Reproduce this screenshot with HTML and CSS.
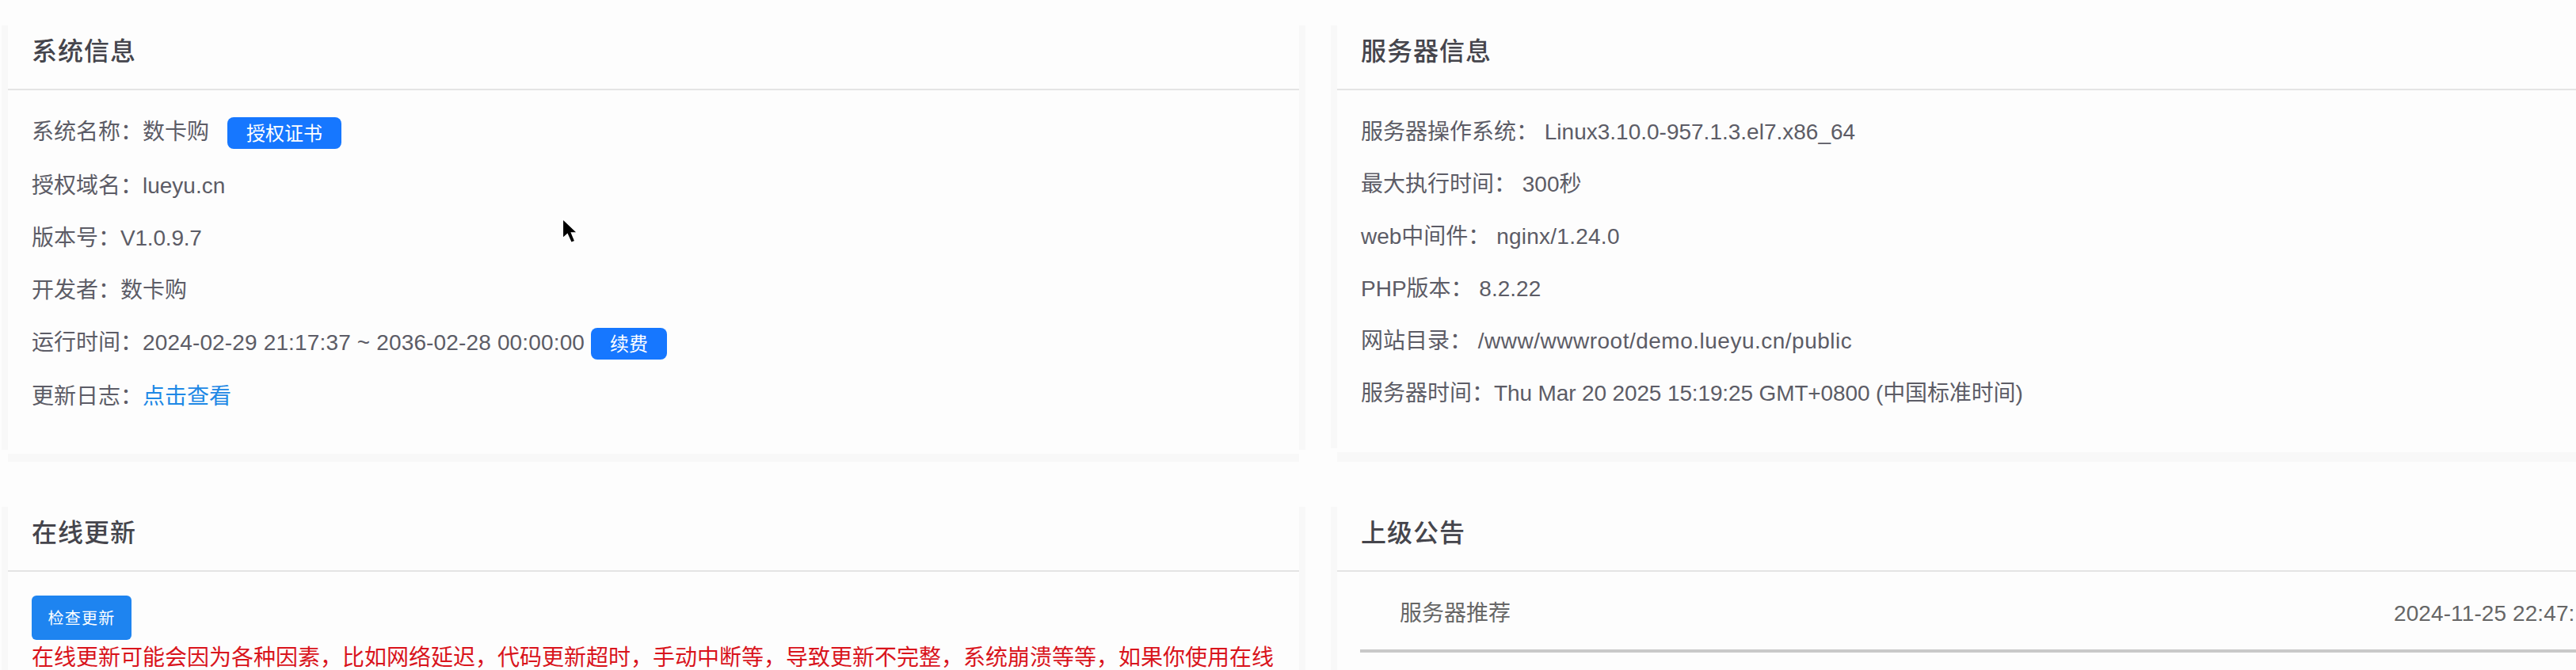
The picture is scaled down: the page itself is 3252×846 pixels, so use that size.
FILE: index.html
```html
<!DOCTYPE html>
<html lang="zh-CN">
<head>
<meta charset="utf-8">
<title>系统信息</title>
<link rel="stylesheet" href="styles.css">
</head>
<body>
<main class="dashboard">
  <section class="card card-system">
    <h2 class="card-header">系统信息</h2>
    <div class="card-body">
      <div class="row row-action"><span>系统名称：数卡购</span><button class="tag tag-license">授权证书</button></div>
      <div class="row"><span>授权域名：lueyu.cn</span></div>
      <div class="row"><span>版本号：<span class="version">V1.0.9.7</span></span></div>
      <div class="row"><span>开发者：数卡购</span></div>
      <div class="row row-action"><span>运行时间：<span class="period">2024-02-29 21:17:37 ~ 2036-02-28 00:00:00</span></span><button class="tag tag-renew">续费</button></div>
      <div class="row"><span>更新日志：<a class="link">点击查看</a></span></div>
    </div>
  </section>
  <section class="card card-server">
    <h2 class="card-header">服务器信息</h2>
    <div class="card-body">
      <div class="row"><span>服务器操作系统： Linux3.10.0-957.1.3.el7.x86_64</span></div>
      <div class="row"><span>最大执行时间： 300秒</span></div>
      <div class="row"><span>web中间件： <span class="middleware">nginx/1.24.0</span></span></div>
      <div class="row"><span>PHP版本： 8.2.22</span></div>
      <div class="row"><span>网站目录： <span class="path">/www/wwwroot/demo.lueyu.cn/public</span></span></div>
      <div class="row"><span>服务器时间：<span class="clock">Thu Mar 20 2025 15:19:25 GMT+0800 (中国标准时间)</span></span></div>
    </div>
  </section>
  <section class="card card-lower">
    <h2 class="card-header">在线更新</h2>
    <div class="update-body">
      <button class="update-btn">检查更新</button>
      <p class="warning">在线更新可能会因为各种因素，比如网络延迟，代码更新超时，手动中断等，导致更新不完整，系统崩溃等等，如果你使用在线</p>
    </div>
  </section>
  <section class="card card-lower">
    <h2 class="card-header">上级公告</h2>
    <div class="notice-body">
      <div class="notice"><span>服务器推荐</span><time class="notice-time">2024-11-25 22:47:</time></div>
    </div>
  </section>
</main>
<svg class="cursor" width="26" height="37" viewBox="0 0 24 34">
  <path d="M3 2V25L8.5 20L13 30L17.5 28L13.5 18.5H20.5Z" fill="#000" stroke="#fff" stroke-width="1.5"/>
</svg>
</body>
</html>
```
FILE: styles.css
```css
* { box-sizing: border-box; }

body {
  margin: 0;
  width: 3252px;
  height: 846px;
  overflow: hidden;
  background: #fdfdfd;
  color: #5c5c66;
  font: 28px/66px "Liberation Sans", "Noto Sans CJK SC", sans-serif;
}

.dashboard {
  display: grid;
  grid-template-columns: 1630px 1564px;
  grid-template-rows: 549px 214px;
  gap: 59px 48px;
  align-items: start;
  padding: 24px 0 0 10px;
  width: 3252px;
  height: 846px;
  overflow: hidden;
  position: relative;
  z-index: 0;
}

.card {
  position: relative;
  background: #fdfdfd;
}

.card-system { height: 549px; }
.card-server { height: 547px; }
.card-lower { height: 214px; }

/* soft edges around each card */
.card::before,
.card::after {
  content: "";
  position: absolute;
  z-index: -1;
}
.card::before {
  inset: 8px -8px 5px -8px;
  background: #f8f8f8;
}
.card::after {
  inset: 50% 0 -10px 0;
  background: #f8f8f8;
}
.card-server::after { bottom: -12px; }
.card-lower::before { bottom: 0; }

.card-header {
  margin: 0;
  height: 90px;
  padding: 7px 30px 0;
  border-bottom: 2px solid #e4e4e4;
  color: #45454c;
  font-size: 32px;
  line-height: 68px;
  font-weight: 500;
  letter-spacing: 1px;
}

.card-body { padding: 20px 30px 0; }

.row {
  display: flex;
  align-items: flex-start;
  height: 66px;
  white-space: pre;
}
.row-action { height: 68px; }

.version { letter-spacing: -0.2px; }
.period { letter-spacing: 0.15px; }
.middleware { letter-spacing: 0.25px; }
.path { letter-spacing: 0.5px; }
.clock { letter-spacing: -0.13px; }

button {
  border: 0;
  padding: 0;
  color: #fff;
  font-family: inherit;
}

.tag {
  height: 40px;
  margin-top: 14px;
  border-radius: 8px;
  background: #1677ff;
  font-size: 24px;
  line-height: 41px;
}
.tag-license { width: 144px; margin-left: 23px; }
.tag-renew { width: 96px; margin-left: 8px; }

.link { color: #1e88e5; }

.update-body { padding: 30px 30px 0; }

.update-btn {
  display: block;
  width: 126px;
  height: 56px;
  border-radius: 6px;
  background: #1e84f0;
  font-size: 20px;
  line-height: 58px;
  letter-spacing: 1.3px;
}

.warning {
  margin: 0;
  color: #d9141c;
  line-height: 46px;
  height: 38px;
  white-space: nowrap;
}

.notice-body { padding: 0 0 0 29px; }

.notice {
  display: flex;
  justify-content: space-between;
  height: 102px;
  padding: 20px 0 0 50px;
  border-bottom: 4px solid #c9c9c9;
  color: #666;
}
.notice-time {
  width: 230px;
  white-space: nowrap;
  letter-spacing: 0.1px;
}

.cursor {
  position: absolute;
  left: 707px;
  top: 274px;
}
```
